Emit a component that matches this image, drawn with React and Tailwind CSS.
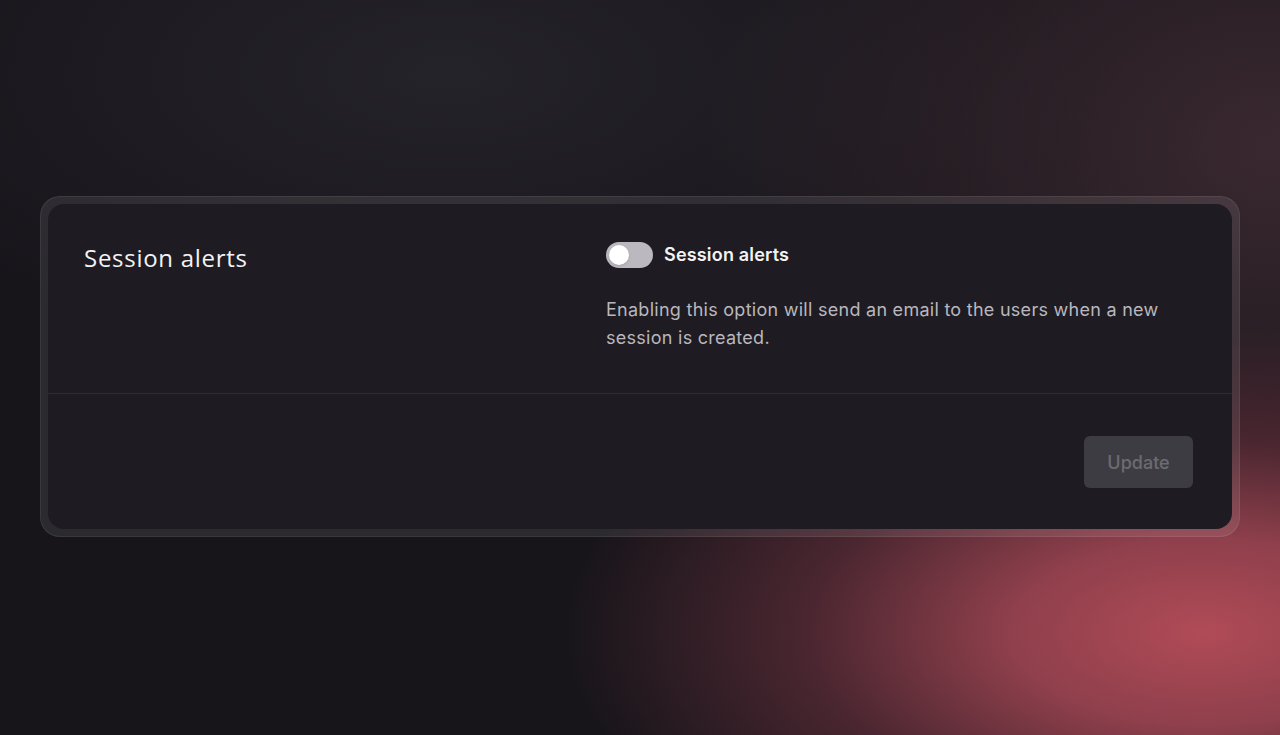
import React, { useState } from "react";

const App = () => {
  const [enabled, setEnabled] = useState(false);

  return (
    <div className="relative min-h-screen w-full overflow-hidden bg-[#17151a] font-['Inter',sans-serif]">
      {/* background glow */}
      <div className="absolute inset-0 bg-[radial-gradient(ellipse_50%_42%_at_94%_86%,#b04b57_0%,#8f404c_30%,#4a2630_62%,transparent_100%),radial-gradient(ellipse_45%_55%_at_100%_20%,#3a2830_0%,transparent_100%),radial-gradient(ellipse_50%_40%_at_35%_10%,#25232a_0%,transparent_100%)]" />

      <div className="relative flex min-h-screen items-start px-10 pt-[196px]">
        {/* frame */}
        <div className="w-full rounded-[20px] border border-white/[0.07] bg-white/[0.09] p-[7px]">
          {/* card */}
          <div className="rounded-2xl bg-[#1e1c22]">
            <div className="flex px-9 pt-[37px] pb-[41px]">
              <div className="w-[522px] shrink-0">
                <h2 className="pt-[1px] font-['Open_Sans',sans-serif] text-[24px] leading-8 font-medium tracking-[0.03em] text-[#f3f2f5]">
                  Session alerts
                </h2>
              </div>
              <div className="flex-1 pr-1">
                <div className="flex items-center gap-[11px]">
                  <button
                    onClick={() => setEnabled(!enabled)}
                    className={
                      enabled
                        ? "flex h-[26px] w-[47px] items-center justify-end rounded-full bg-[#c94b5a] p-[3px]"
                        : "flex h-[26px] w-[47px] items-center justify-start rounded-full bg-[#bbb9bf] p-[3px]"
                    }
                  >
                    <span className="h-5 w-5 rounded-full bg-white shadow" />
                  </button>
                  <span className="text-[18px] leading-7 font-semibold tracking-[0.01em] text-[#f3f2f5]">
                    Session alerts
                  </span>
                </div>
                <p className="mt-[27px] max-w-[570px] text-[18px] leading-7 tracking-[0.015em] text-[#b9b7bd]">
                  Enabling this option will send an email to the users when a new session is created.
                </p>
              </div>
            </div>

            <div className="h-px bg-white/[0.07]" />

            <div className="flex justify-end px-[39px] pt-[42px] pb-[41px]">
              <button
                disabled
                className="h-[52px] w-[109px] rounded-md bg-[#3e3c43] text-[18px] font-medium text-[#6d6b72]"
              >
                Update
              </button>
            </div>
          </div>
        </div>
      </div>
    </div>
  );
};

export default App;
